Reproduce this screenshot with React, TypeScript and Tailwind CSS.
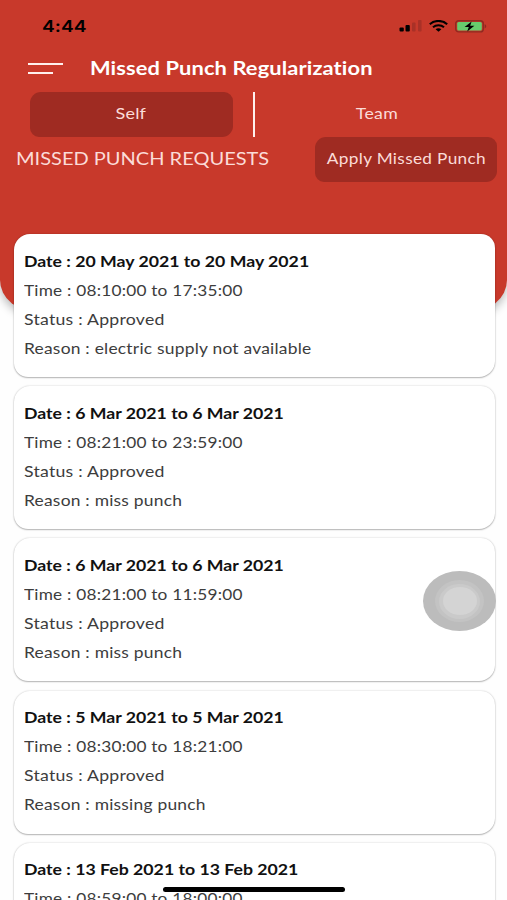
interface PunchRequest {
  id: number;
  date: string;
  time: string;
  status: string;
  reason: string;
}

const requests: PunchRequest[] = [
  { id: 1, date: '20 May 2021 to 20 May 2021', time: '08:10:00 to 17:35:00', status: 'Approved', reason: 'electric supply not available' },
  { id: 2, date: '6 Mar 2021 to 6 Mar 2021', time: '08:21:00 to 23:59:00', status: 'Approved', reason: 'miss punch' },
  { id: 3, date: '6 Mar 2021 to 6 Mar 2021', time: '08:21:00 to 11:59:00', status: 'Approved', reason: 'miss punch' },
  { id: 4, date: '5 Mar 2021 to 5 Mar 2021', time: '08:30:00 to 18:21:00', status: 'Approved', reason: 'missing punch' },
  { id: 5, date: '13 Feb 2021 to 13 Feb 2021', time: '08:59:00 to 18:00:00', status: 'Approved', reason: '' },
];

const StatusBar = () => (
  <div className="flex h-[52px] items-center justify-between pl-[42px] pr-[19px]">
    <span className="origin-left scale-x-[1.2] font-['Inter',sans-serif] text-[16px] font-semibold leading-none">4:44</span>
    <div className="flex items-center gap-[7px]">
      <svg width="23" height="12" viewBox="0 0 23 12">
        <rect x="0.5" y="7.5" width="4.3" height="4" rx="1" />
        <rect x="6.5" y="5" width="4.3" height="6.5" rx="1" />
        <rect x="13" y="2.5" width="3.6" height="9" rx="1" fill="#a93127" />
        <rect x="19" y="0" width="3.6" height="11.5" rx="1" fill="#a93127" />
      </svg>
      <svg width="19" height="12" viewBox="0 0 19 12" fill="none" stroke="#000" strokeWidth="2">
        <path d="M0.8 4.2C5.6-0.2 13.4-0.2 18.2 4.2" />
        <path d="M4 7.3C7 4.6 12 4.6 15 7.3" />
        <path d="M6.6 9.2C8.2 7.8 10.8 7.8 12.4 9.2L9.5 11.8Z" fill="#000" stroke="none" />
      </svg>
      <svg width="33" height="13" viewBox="0 0 33 13">
        <rect x="0.7" y="0.7" width="27.6" height="11.2" rx="3" fill="none" stroke="#8f2a20" strokeWidth="1.4" />
        <rect x="2.2" y="2" width="24.6" height="8.6" rx="1.5" fill="#67cc6d" />
        <path d="M29.6 4.3C31.8 5 31.8 7.7 29.6 8.4Z" fill="#8f2a20" />
        <path d="M16.6 1.4L9.6 7.1H13.8L12.2 11.4L19.4 5.7H15.2Z" />
      </svg>
    </div>
  </div>
);

const Header = () => (
  <header className="h-[313px] rounded-b-[40px_33px] bg-[#c8392b] shadow-[0_4px_10px_rgba(0,0,0,0.28)]">
    <StatusBar />
    <div className="flex h-[32px] items-center pl-[28px]">
      <button aria-label="Menu" className="flex w-[35px] flex-col gap-[7px]">
        <span className="h-[2px] w-full bg-[#fff0ee]" />
        <span className="h-[2px] w-[25px] bg-[#fff0ee]" />
      </button>
      <h1 className="ml-[27px] origin-left scale-x-[1.15] whitespace-nowrap pb-[2px] text-[19px] font-bold leading-none tracking-[0.1px] text-white">
        Missed Punch Regularization
      </h1>
    </div>
    <div className="mt-[8px] flex h-[45px] pl-[30px] text-[15px] text-[#fbdcd8]">
      <button className="flex w-[203px] items-center justify-center rounded-[11px_9px] bg-[#9f2b22] pb-[2px] pr-[1px]">
        <span className="inline-block scale-x-[1.2] tracking-[0.2px]">Self</span>
      </button>
      <div className="ml-[20px] w-[2px] bg-[#fff0ee]" />
      <button className="flex w-[243px] items-center justify-center pb-[2px]">
        <span className="inline-block scale-x-[1.18] tracking-[0.3px]">Team</span>
      </button>
    </div>
    <div className="flex h-[45px] items-center justify-between pl-[16px] pr-[10px] text-[#fbdcd8]">
      <h2 className="origin-left scale-x-[1.213] whitespace-nowrap text-[16.5px]">MISSED PUNCH REQUESTS</h2>
      <button className="flex h-[45px] w-[182px] items-center justify-center whitespace-nowrap rounded-[11px_9px] bg-[#9f2b22] pb-[2px] text-[15px]">
        <span className="inline-block scale-x-[1.146] tracking-[0.3px]">Apply Missed Punch</span>
      </button>
    </div>
  </header>
);

const RequestCard = ({ request }: { request: PunchRequest }) => (
  <article className="h-[143px] shrink-0 rounded-[16px_14px] bg-white pl-[10.5px] pt-[12.6px] text-[15px] leading-[29.1px] text-[#3d3d3d] shadow-[0_0_2px_rgba(0,0,0,0.2),0_1px_1.5px_rgba(0,0,0,0.25)]">
    <p className="w-fit origin-left scale-x-[1.18] whitespace-nowrap font-bold text-[#111]">Date : {request.date}</p>
    <p className="w-fit origin-left scale-x-[1.148] whitespace-nowrap tracking-[0.2px]">Time : {request.time}</p>
    {request.reason && (
      <>
        <p className="w-fit origin-left scale-x-[1.178] whitespace-nowrap tracking-[0.2px]">Status : {request.status}</p>
        <p className="w-fit origin-left scale-x-[1.16] whitespace-nowrap tracking-[0.2px]">Reason : {request.reason}</p>
      </>
    )}
  </article>
);

export default function App() {
  return (
    <div className="relative h-[900px] w-[507px] overflow-hidden bg-[#fefefe] font-['Lato',sans-serif] [font-variant-ligatures:none]">
      <Header />
      <main className="relative -mt-[79px] flex flex-col gap-[9.2px] pl-[13.5px] pr-[12px]">
        {requests.map((request) => (
          <RequestCard key={request.id} request={request} />
        ))}
      </main>

      {/* AssistiveTouch button */}
      <div className="absolute left-[423px] top-[571px] flex h-[60px] w-[73px] items-center justify-center rounded-[50%] bg-[#bcbcbc]">
        <div className="flex h-[42px] w-[49px] items-center justify-center rounded-[50%] bg-[#c3c3c3]">
          <div className="flex h-[35px] w-[41px] items-center justify-center rounded-[50%] bg-[#cacaca]">
            <div className="h-[28px] w-[34px] rounded-[50%] bg-[#d4d4d4]" />
          </div>
        </div>
      </div>
      <div className="absolute left-[163px] top-[887px] h-[5px] w-[182px] rounded-full bg-black" />
    </div>
  );
}
